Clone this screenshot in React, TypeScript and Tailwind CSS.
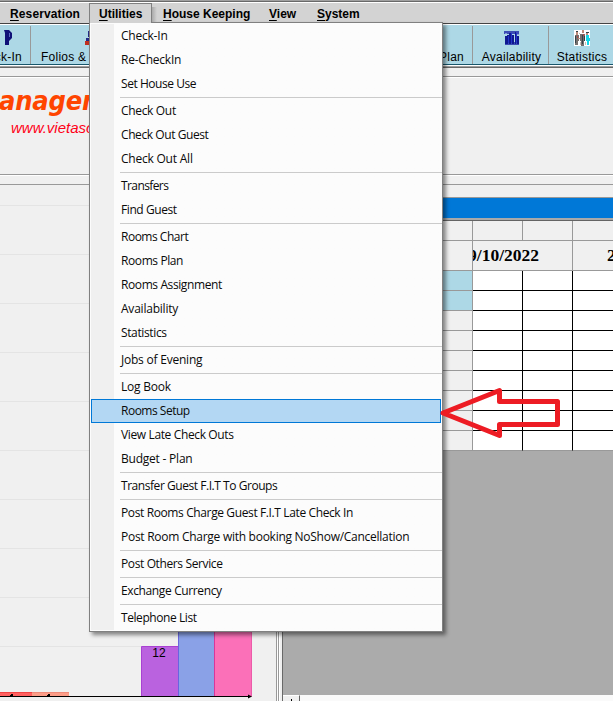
import { Fragment, type ReactNode } from "react";

const groups: [string, string][][] = [
  [["Check-In", "tracking-[-0.22px]"], ["Re-CheckIn", "tracking-[-0.22px]"], ["Set House Use", "tracking-[-0.45px]"]],
  [["Check Out", "tracking-[-0.33px]"], ["Check Out Guest", "tracking-[-0.42px]"], ["Check Out All", "tracking-[-0.22px]"]],
  [["Transfers", "tracking-[-0.6px]"], ["Find Guest", "tracking-[-0.42px]"]],
  [
    ["Rooms Chart", "tracking-[-0.49px]"],
    ["Rooms Plan", "tracking-[-0.4px]"],
    ["Rooms Assignment", "tracking-[-0.4px]"],
    ["Availability", "tracking-[-0.22px]"],
    ["Statistics", "tracking-[-0.37px]"],
  ],
  [["Jobs of Evening", "tracking-[-0.22px]"]],
  [
    ["Log Book", "tracking-[-0.22px]"],
    ["Rooms Setup", "tracking-[-0.49px]"],
    ["View Late Check Outs", "tracking-[-0.37px]"],
    ["Budget - Plan", "tracking-[-0.22px]"],
  ],
  [["Transfer Guest F.I.T To Groups", "tracking-[-0.45px]"]],
  [
    ["Post Rooms Charge Guest F.I.T Late Check In", "tracking-[-0.38px]"],
    ["Post Room Charge with booking NoShow/Cancellation", "tracking-[-0.27px]"],
  ],
  [["Post Others Service", "tracking-[-0.38px]"]],
  [["Exchange Currency", "tracking-[-0.37px]"]],
  [["Telephone List", "tracking-[-0.43px]"]],
];

function MenuTitle({ letter, rest, className }: { letter: string; rest: string; className: string }) {
  return (
    <div className={`whitespace-nowrap text-[12px] font-bold leading-[19px] ${className}`}>
      <span className="underline underline-offset-2">{letter}</span>{rest}
    </div>
  );
}

function Dropdown() {
  return (
    <div className="absolute left-[89px] top-[22px] z-10 h-[610px] w-[354px] border border-[#808080] bg-[#fcfcfc] p-px shadow-[3px_3px_4px_rgba(0,0,0,0.45)]">
      <div className="h-[606px] bg-linear-to-r from-[#f0f0f0] from-[23px] to-[#fcfcfc] to-[23px]">
        {groups.map((g, i) => (
          <Fragment key={i}>
            {i > 0 && <div className="-mr-px ml-[29px] h-[3px] pt-px"><div className="h-px bg-[#cbcbcb]" /></div>}
            {g.map(([label, tracking]) => (
              <div
                key={label}
                className={`flex h-6 items-center whitespace-nowrap font-['Open_Sans','Noto_Sans',sans-serif] text-[12px] text-[#0a0a0a] ${tracking} ${label === "Rooms Setup" ? "border border-[#0078d7] bg-[#b3d7f3] pl-[29px]" : "pl-[30px]"}`}
              >
                {label}
              </div>
            ))}
          </Fragment>
        ))}
      </div>
    </div>
  );
}

function PeopleIcon() {
  return (
    <svg className="h-4 w-4" viewBox="0 0 16 16" shapeRendering="crispEdges">
      <path fill="#fff" d="M0 0h16v16H0z" />
      <path fill="#74706e" d="M1 5h4v6H4v4H1zM6 4h5v6h-1v6H7v-5H6z" />
      <path fill="#bd8b7b" d="M2 2h2v3H2zM8 0h2v3H8zM12 3h2v2h-2zM4 8h2v1H4z" />
      <path fill="#35434a" d="M1 6h1v7H1zM8 5h1v9H8zM12 2h3v1h-3zM10 6h1v5h-1zM2 1h2v1H2z" />
      <path fill="#12d6e6" d="M12 5h3v3h1v3h-1v4h-2v-4h-1z" />
      <path fill="#b04848" d="M3 6h1v2H3zM9 4h1v2H9z" />
      <path fill="#c7bcb4" d="M5 3h1v1H5zM11 12h1v3h-1zM6 12h1v3H6z" />
    </svg>
  );
}

function BarsIcon() {
  return (
    <svg className="h-4 w-4" viewBox="0 0 16 16" shapeRendering="crispEdges">
      <path fill="#3c4cb4" d="M0 1h15v3H0zM1 12h14v3H1z" />
      <path fill="#8596d8" d="M1 3h2v1H1zM13 4h2v1h-2z" />
      <path fill="#101890" d="M1 6h3v8H1zM5 3h2v11H5zM8 5h2v9H8zM11 2h1v12h-1zM13 6h2v8h-2zM3 5h2v1H3z" />
      <path fill="#2335cc" d="M4 6h1v7H4zM7 3h1v10H7zM12 3h1v10h-1z" />
    </svg>
  );
}

function Tool({ className, label, children }: { className: string; label: string; children?: ReactNode }) {
  return (
    <div className={`flex h-[38px] shrink-0 flex-col border-r border-[#999] pt-1 ${className}`}>
      <div className="h-4 shrink-0">{children}</div>
      <div className="mt-[2px] whitespace-nowrap text-[12px] leading-[18px] tracking-[0.25px]">{label}</div>
    </div>
  );
}

function Chart() {
  return (
    <svg className="block h-[516px] w-[276px] shrink-0" viewBox="0 185 276 516">
      {[205, 254, 303, 352, 401, 450, 499, 548, 597, 646].map((y) => (
        <path key={y} d={`M0 ${y + 0.5}H252`} stroke="#e4e4e4" />
      ))}
      <path fill="#ff6060" d="M0 692h32v5H0z" />
      <path fill="#fc9d88" d="M32 692h37v5H32z" />
      <path stroke="#f04343" d="M0 692.5h32" />
      <path stroke="#ee8a78" d="M32 692.5h37" />
      <path fill="#ba62df" stroke="#a941d2" d="M141.500 646.500h37v50h-37z" />
      <path fill="#8aa1e7" d="M179 620h35v77h-35z" />
      <path stroke="#6865df" d="M178.500 620v76" />
      <path fill="#fb70b8" d="M214 620h38v77h-38z" />
      <path stroke="#d9369a" d="M214.500 620v76" />
      <path stroke="#ec5ba9" d="M251.500 620v76" />
      <text x="159" y="657" textAnchor="middle" fontSize="12" fontFamily="Liberation Sans">12</text>
      <path d="M10 696v-1h1v-1h2v2zM47 696v-1h1v-1h2v2z" />
      <path d="M0 696.500h250" stroke="#000" />
      <path d="M248 694.500l4 2-4 2z" />
    </svg>
  );
}

function Schedule() {
  return (
    <div className="w-[330px] shrink-0">
      <div className="h-3 bg-[#f0f0f0]" />
      <div className="h-px bg-[#999]" />
      <div className="h-[20px] bg-[#0078d7]" />
      <div className="h-[2px] bg-[#a9a9a9]" />
      <div className="h-px bg-[#646464]" />
      <div className="grid h-[20px] grid-cols-[190px_50px_50px_40px] border-b border-[#999]">
        {[0, 1, 2].map((c) => <div key={c} className="border-r border-[#999]" />)}
      </div>
      <div className="grid h-[30px] grid-cols-[190px_100px_40px] border-b border-[#999] font-['Liberation_Serif',serif] text-[17.5px] font-bold leading-[29px]">
        <div className="border-r border-[#999]" />
        <div className="flex justify-end overflow-hidden border-r border-[#999] pr-[33px]">29/10/2022</div>
        <div className="overflow-hidden pl-[34px]">29</div>
      </div>
      {[0, 1, 2, 3, 4, 5, 6, 7, 8].map((r) => (
        <div key={r} className="grid h-[20px] grid-cols-[190px_50px_50px_40px]">
          <div className={`border-b border-r border-[#999] ${r < 2 ? "bg-[#add8e6]" : ""}`} />
          {[0, 1, 2].map((c) => (
            <div key={c} className={`border-b bg-white ${r < 8 ? "border-b-black" : "border-b-[#999]"} ${c < 2 ? "border-r border-r-black" : ""}`} />
          ))}
        </div>
      ))}
      <div className="h-[244px] bg-[#ababab]" />
      <div className="flex h-[6px] bg-[#fafafa]">
        <div className="flex w-[17px] items-end justify-center border-r border-t border-r-[#646464] border-t-white bg-[#f0f0f0]">
          <div className="h-[2px] w-px bg-black" />
        </div>
      </div>
    </div>
  );
}

export default function App() {
  return (
    <div className="relative h-[701px] w-[613px] overflow-hidden bg-[#f0f0f0] font-['Liberation_Sans',Arial,sans-serif] text-black">
      <div className="h-px bg-[#a0a0a0]" />
      <div className="h-px bg-[#696969]" />
      <div className="h-px bg-white" />
      <div className="flex h-5 bg-[#d3d3d3]">
        <MenuTitle letter="R" rest="eservation" className="ml-[10px] w-[79px] pt-[2px] tracking-[0.12px]" />
        <div className="z-20 h-5 w-[63px] border-x border-t border-[#808080] bg-[#d3d3d3] pl-[9px]">
          <MenuTitle letter="U" rest="tilities" className="pt-px" />
        </div>
        <div className="mt-1 w-[5px] bg-linear-to-r from-[#aaa] to-[#d3d3d3]" />
        <MenuTitle letter="H" rest="ouse Keeping" className="ml-[6px] w-[106px] pt-[2px]" />
        <MenuTitle letter="V" rest="iew" className="w-[48px] pt-[2px]" />
        <MenuTitle letter="S" rest="ystem" className="pt-[2px]" />
      </div>
      <div className="h-px bg-[#444]" />
      <div className="h-px bg-white" />
      <div className="flex h-[39px] overflow-hidden bg-[#add8e6] pt-px">
        <Tool className="w-[31px] items-end pr-[8px]" label="Check-In">
          <svg className="mr-[10px] h-4 w-4" viewBox="0 0 16 16">
            <path fill="#101078" d="M8 0h5l3 3v5l-3 3v4H9V3z" />
            <path fill="#5c6ac0" d="M13 3h1v4h-1z" />
          </svg>
        </Tool>
        <Tool className="w-[118px] pl-[10px]" label="Folios & Checks">
          <svg className="ml-[43px] h-4 w-4" viewBox="0 0 16 16">
            <path fill="#252a86" d="M4 1h6v6H4zM2 8h10v6H2z" />
            <path fill="#c03020" d="M1 11h4v4H1z" />
          </svg>
        </Tool>
        <div className="w-[255px] shrink-0" />
        <Tool className="w-[69px] items-end pr-[8px]" label="Rooms Plan" />
        <Tool className="w-[76px] items-center pl-[2px]" label="Availability"><BarsIcon /></Tool>
        <Tool className="w-[66px] items-center pl-px" label="Statistics"><PeopleIcon /></Tool>
      </div>
      <div className="h-px bg-[#17566b]" />
      <div className="h-px bg-white" />
      <div className="h-px bg-[#a0a0a0]" />
      <div className="h-px bg-[#696969]" />
      <div className="h-2" />
      <div className="h-px bg-[#999]" />
      <div className="h-px bg-white" />
      <div className="h-24 overflow-hidden pt-2">
        <div className="-ml-[25px] whitespace-nowrap font-['DejaVu_Sans_Condensed','DejaVu_Sans',sans-serif] text-[27px] font-bold italic leading-[30px] tracking-[-0.2px] text-[#ff4500]">Management</div>
        <div className="ml-[11px] mt-[2px] whitespace-nowrap text-[15px] italic leading-[20px] text-[#ff0018]">www.vietasoft.com</div>
      </div>
      <div className="h-px bg-[#999]" />
      <div className="h-px bg-white" />
      <div className="h-2" />
      <div className="h-px bg-[#999]" />
      <div className="flex h-[516px]">
        <Chart />
        <div className="w-[7px] shrink-0 border-l border-r border-l-[#999] border-r-[#696969] bg-[linear-gradient(to_right,white_1px,#999_1px,#999_2px,white_2px,white_3px,#f0f0f0_3px)]" />
        <Schedule />
      </div>
      <Dropdown />
      <svg className="absolute left-[436px] top-[384px] z-20 h-[58px] w-[128px]" viewBox="436 384 128 58">
        <path d="M443 413L499.500 390.500V401.500H557.500V424.500H499.500V435.500Z" fill="none" stroke="#ed1c24" strokeWidth="5" strokeLinejoin="round" />
      </svg>
    </div>
  );
}
